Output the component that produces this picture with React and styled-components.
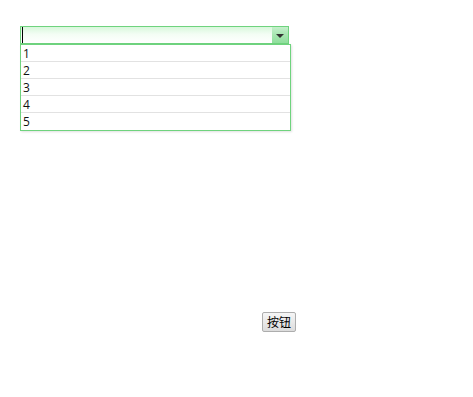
import React from "react";
import styled, { createGlobalStyle } from "styled-components";

const Global = createGlobalStyle`
  html, body { margin: 0; padding: 0; background: #fff; }
  body { font-family: "Segoe UI", "Noto Sans", "Noto Sans CJK SC", sans-serif; font-size: 12px; color: #000; }
`;

const Page = styled.div`
  position: relative;
  width: 473px;
  height: 397px;
  padding: 26px 0 0 20px;
  box-sizing: border-box;
`;

const ComboWrap = styled.div`
  position: relative;
  width: 269px;
`;

const Combo = styled.div`
  display: flex;
  height: 18px;
  border: 1px solid #6fd37e;
  box-sizing: border-box;
  background: linear-gradient(to bottom, #d9f7dc 0%, #f3fdf4 45%, #ffffff 100%);
`;

const Field = styled.div`
  flex: 1;
  display: flex;
  align-items: stretch;
  padding-left: 1px;
`;

const Caret = styled.span`
  width: 1px;
  background: #000;
`;

const Arrow = styled.div`
  width: 16px;
  display: flex;
  align-items: center;
  justify-content: center;
  background: linear-gradient(to bottom, #c4efcb 0%, #a6e6b0 50%, #8fdf9c 100%);
`;

const Tri = styled.span`
  width: 0;
  height: 0;
  border-left: 4px solid transparent;
  border-right: 4px solid transparent;
  border-top: 4px solid #333;
  margin-top: 1px;
`;

const List = styled.div`
  position: absolute;
  left: 0;
  top: 18px;
  width: 271px;
  border: 1px solid #6fd37e;
  box-sizing: border-box;
  background: #fff;
  box-shadow: 1px 1px 2px rgba(0, 0, 0, 0.12);
`;

const Item = styled.div`
  height: 17px;
  line-height: 17px;
  padding-left: 2px;
  box-sizing: border-box;
  font-family: "Segoe UI", "Open Sans", "Noto Sans", sans-serif;
  font-size: 12px;
  color: #111;
  border-bottom: ${(p) => (p.$last ? "none" : "1px solid #e2e2e2")};
`;

const ButtonRow = styled.div`
  display: flex;
  padding: 268px 0 0 242px;
`;

const Button = styled.button`
  height: 20px;
  width: 34px;
  padding: 0;
  font-family: "Noto Sans CJK SC", sans-serif;
  font-size: 12px;
  line-height: 16px;
  color: #000;
  border: 1px solid #adadad;
  border-radius: 2px;
  background: linear-gradient(to bottom, #f6f6f6 0%, #e9e9e9 50%, #dcdcdc 100%);
`;

export default function App() {
  const items = ["1", "2", "3", "4", "5"];
  return (
    <Page>
      <Global />
      <ComboWrap>
        <Combo>
          <Field>
            <Caret />
          </Field>
          <Arrow>
            <Tri />
          </Arrow>
        </Combo>
        <List>
          {items.map((t, i) => (
            <Item key={t} $last={i === items.length - 1}>
              {t}
            </Item>
          ))}
        </List>
      </ComboWrap>
      <ButtonRow>
        <Button>按钮</Button>
      </ButtonRow>
    </Page>
  );
}
